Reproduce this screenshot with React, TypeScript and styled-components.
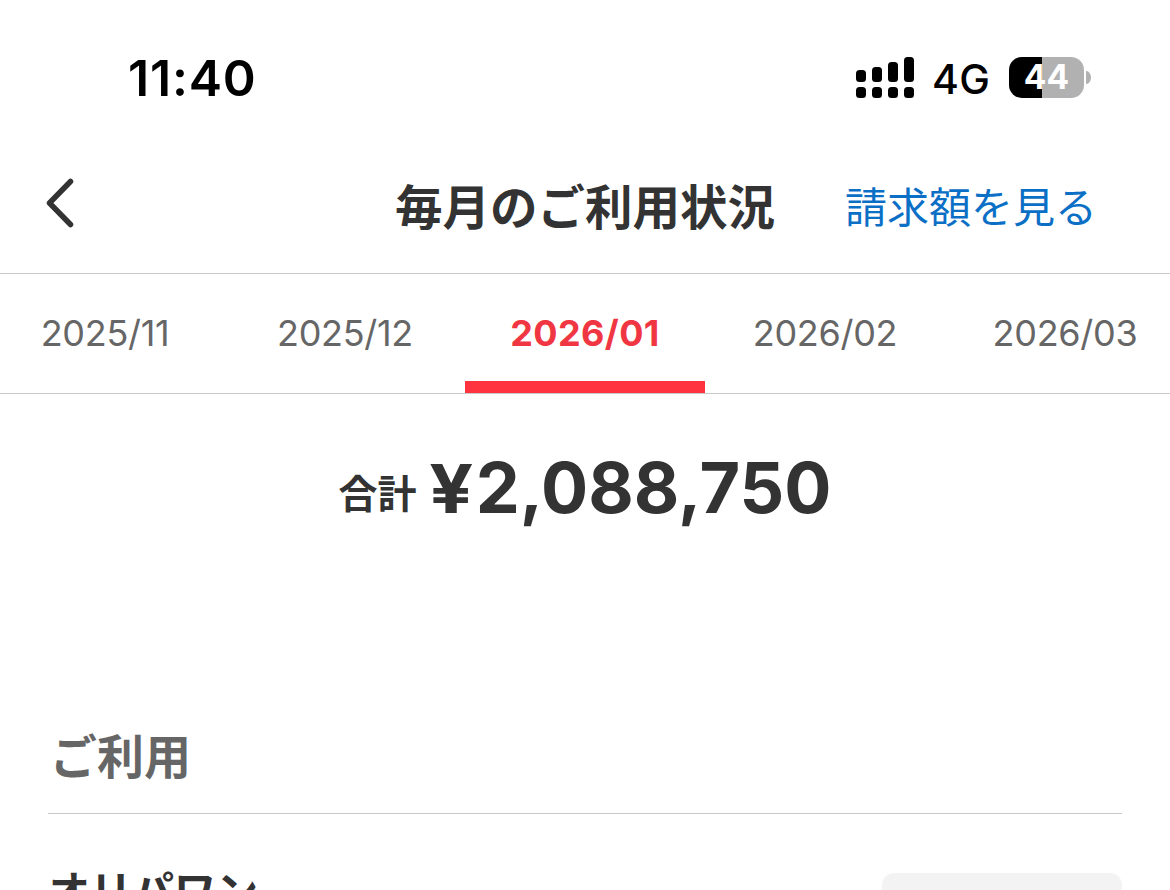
import styled, { createGlobalStyle } from 'styled-components'

const GlobalStyle = createGlobalStyle`
  * {
    box-sizing: border-box;
  }

  body {
    margin: 0;
    background: #fff;
    color: #333;
    font-family: 'Inter', 'Noto Sans CJK JP', sans-serif;
    overflow: hidden;
  }
`

const Screen = styled.main`
  height: 890px;
  overflow: hidden;
  display: flex;
  flex-direction: column;
`

const StatusBar = styled.div`
  flex: none;
  height: 156px;
  padding: 0 79px 0 128px;
  display: flex;
  align-items: center;
  justify-content: space-between;
  color: #000;
`

const Clock = styled.time`
  font-size: 50px;
  font-weight: 600;
  line-height: 60px;
  letter-spacing: 0.8px;
`

const StatusIcons = styled.div`
  display: flex;
  align-items: center;
`

const Network = styled.span`
  width: 95px;
  padding: 2px 0 0 18px;
  font-size: 41px;
  font-weight: 500;
  line-height: 50px;
  letter-spacing: 0.4px;
  white-space: nowrap;
`

const Battery = styled.div`
  margin-bottom: 2px;
  display: flex;
  align-items: center;
  gap: 2px;
`

const BatteryBody = styled.div<{ $level: number }>`
  width: 75px;
  height: 41px;
  border-radius: 13px;
  display: flex;
  align-items: center;
  justify-content: center;
  background: ${({ $level }) =>
    `linear-gradient(to right, #000 ${$level}%, #b1b1b1 ${$level}%)`};
  color: #fff;
  font-size: 33.5px;
  font-weight: 700;
  line-height: 41px;
`

const BatteryTip = styled.span`
  width: 5px;
  height: 13px;
  border-radius: 0 5px 5px 0 / 0 7px 7px 0;
  background: #b1b1b1;
`

const Header = styled.header`
  flex: none;
  height: 118px;
  padding: 0 73px 14px;
  display: grid;
  grid-template-columns: 1fr auto 1fr;
  align-items: center;
  border-bottom: 1px solid #c8c8c8;
`

const BackButton = styled.button`
  display: flex;
  width: 28px;
  margin-left: -27px;
  padding: 0 0 9px;
  border: none;
  background: none;
  color: #333;
`

const Title = styled.h1`
  margin: 0;
  font-size: 47.5px;
  font-weight: 700;
  line-height: 60px;
`

const HeaderLink = styled.a`
  justify-self: end;
  padding-top: 1px;
  color: #0b6fc6;
  font-size: 42px;
  line-height: 60px;
  white-space: nowrap;
`

const Tabs = styled.nav`
  flex: none;
  height: 120px;
  display: grid;
  grid-template-columns: repeat(5, 240px);
  justify-content: center;
  border-bottom: 1px solid #c8c8c8;
`

const Tab = styled.a<{ $active: boolean }>`
  padding-top: ${({ $active }) => ($active ? '11px' : '0')};
  padding-bottom: ${({ $active }) => ($active ? '0' : '1px')};
  display: flex;
  align-items: center;
  justify-content: center;
  border-bottom: ${({ $active }) => ($active ? '12px solid #ff333f' : 'none')};
  color: ${({ $active }) => ($active ? '#f03642' : '#666')};
  font-size: 36px;
  font-weight: ${({ $active }) => ($active ? 700 : 400)};
  font-feature-settings: 'calt' 0;
  font-kerning: none;
  letter-spacing: ${({ $active }) => ($active ? '0.4px' : '-0.3px')};
`

const Total = styled.section`
  flex: none;
  height: 313px;
  padding-top: 48px;
  display: flex;
  align-items: baseline;
  justify-content: center;
  gap: 16px;
`

const TotalLabel = styled.span`
  position: relative;
  top: -5px;
  font-size: 39px;
  font-weight: 700;
`

const Amount = styled.strong`
  font-size: 70px;
  font-weight: 700;
  line-height: 92px;
`

const Yen = styled.span`
  display: inline-block;
  margin-right: 5px;
  font-size: 67px;
  transform: scaleX(1.15);
`

const Usage = styled.section`
  flex: none;
  padding: 0 48px;
`

const UsageTitle = styled.h2`
  height: 107px;
  margin: 0;
  padding: 20px 0 0 2px;
  border-bottom: 1px solid #c8c8c8;
  color: #666;
  font-size: 47px;
  font-weight: 700;
  line-height: 60px;
`

const UsageRow = styled.div`
  padding-top: 50px;
  display: flex;
  justify-content: space-between;
`

const Shop = styled.span`
  padding-top: 7px;
  font-size: 42px;
  font-weight: 700;
  line-height: 42px;
`

const Tag = styled.span`
  margin-top: 9px;
  width: 240px;
  height: 72px;
  border-radius: 12px;
  background: #f3f3f3;
`

const months = ['2025/11', '2025/12', '2026/01', '2026/02', '2026/03']

const SignalIcon = () => (
  <svg width="58" height="42" viewBox="0 0 58 42" fill="currentColor">
    <rect x="0" y="13" width="10" height="12" rx="3.5" />
    <rect x="16" y="10" width="10" height="15" rx="3.5" />
    <rect x="32" y="5" width="10" height="20" rx="3.5" />
    <rect x="48" y="0" width="10" height="25" rx="3.5" />
    <rect x="0" y="30" width="10" height="11" rx="3.5" />
    <rect x="16" y="30" width="10" height="11" rx="3.5" />
    <rect x="32" y="30" width="10" height="11" rx="3.5" />
    <rect x="48" y="30" width="10" height="11" rx="3.5" />
  </svg>
)

const BackIcon = () => (
  <svg width="28" height="50" viewBox="0 0 28 50" fill="none">
    <path
      d="M24.5 3.5 L3.5 25 L24.5 46.5"
      stroke="currentColor"
      strokeWidth="5.5"
      strokeLinecap="round"
      strokeLinejoin="round"
    />
  </svg>
)

export default function App () {
  return (
    <Screen lang="ja">
      <GlobalStyle />
      <StatusBar>
        <Clock>11:40</Clock>
        <StatusIcons>
          <SignalIcon />
          <Network>4G</Network>
          <Battery>
            <BatteryBody $level={44}>44</BatteryBody>
            <BatteryTip />
          </Battery>
        </StatusIcons>
      </StatusBar>
      <Header>
        <BackButton aria-label="戻る">
          <BackIcon />
        </BackButton>
        <Title>毎月のご利用状況</Title>
        <HeaderLink>請求額を見る</HeaderLink>
      </Header>
      <Tabs>
        {months.map((month) => (
          <Tab key={month} $active={month === '2026/01'}>
            {month}
          </Tab>
        ))}
      </Tabs>
      <Total>
        <TotalLabel>合計</TotalLabel>
        <Amount>
          <Yen>¥</Yen>2,088,750
        </Amount>
      </Total>
      <Usage>
        <UsageTitle>ご利用</UsageTitle>
        <UsageRow>
          <Shop>オリパワン</Shop>
          <Tag />
        </UsageRow>
      </Usage>
    </Screen>
  )
}
